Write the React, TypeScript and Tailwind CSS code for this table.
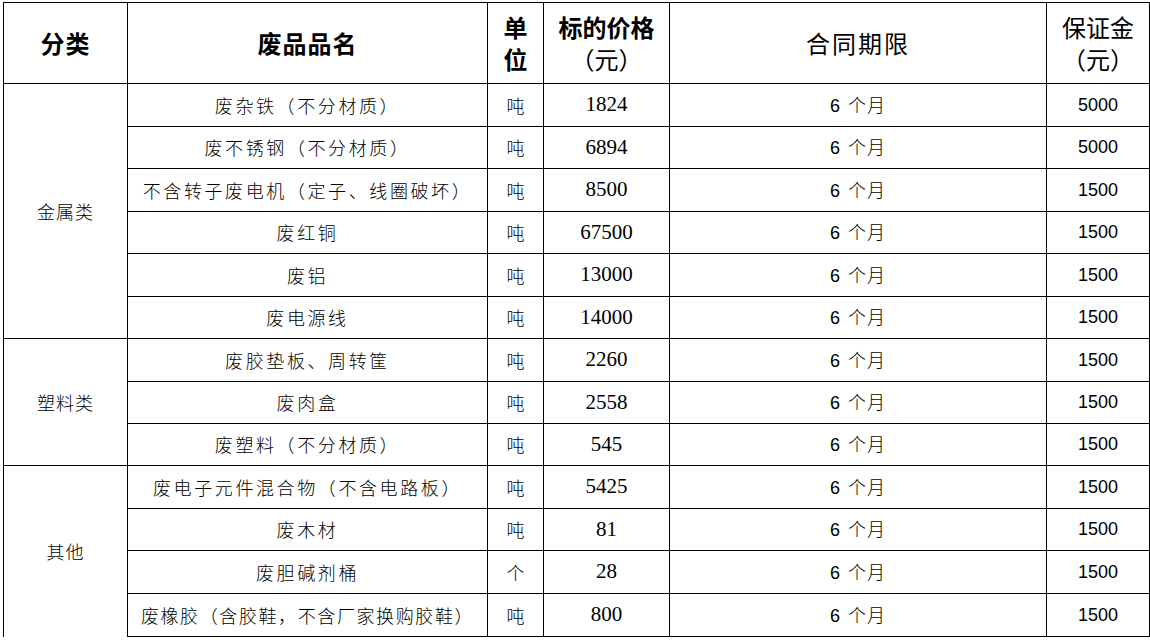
const cjk = "font-['Noto_Sans_CJK_SC',sans-serif]";

interface Item {
  name: string;
  unit: string;
  price: string;
  deposit: string;
  tight?: boolean;
}

interface Group {
  label: string;
  items: Item[];
}

const groups: Group[] = [
  {
    label: '金属类',
    items: [
      { name: '废杂铁（不分材质）', unit: '吨', price: '1824', deposit: '5000' },
      { name: '废不锈钢（不分材质）', unit: '吨', price: '6894', deposit: '5000' },
      { name: '不含转子废电机（定子、线圈破坏）', unit: '吨', price: '8500', deposit: '1500' },
      { name: '废红铜', unit: '吨', price: '67500', deposit: '1500' },
      { name: '废铝', unit: '吨', price: '13000', deposit: '1500' },
      { name: '废电源线', unit: '吨', price: '14000', deposit: '1500' },
    ],
  },
  {
    label: '塑料类',
    items: [
      { name: '废胶垫板、周转筐', unit: '吨', price: '2260', deposit: '1500' },
      { name: '废肉盒', unit: '吨', price: '2558', deposit: '1500' },
      { name: '废塑料（不分材质）', unit: '吨', price: '545', deposit: '1500' },
    ],
  },
  {
    label: '其他',
    items: [
      { name: '废电子元件混合物（不含电路板）', unit: '吨', price: '5425', deposit: '1500' },
      { name: '废木材', unit: '吨', price: '81', deposit: '1500' },
      { name: '废胆碱剂桶', unit: '个', price: '28', deposit: '1500' },
      { name: '废橡胶（含胶鞋，不含厂家换购胶鞋）', unit: '吨', price: '800', deposit: '1500', tight: true },
    ],
  },
];

// row heights measured between grid lines
const rowHeights = [43, 42, 43, 42, 43, 42, 43, 42, 42, 43, 42, 43, 43];

export default function App() {
  let rowIndex = 0;

  return (
    <div className="min-h-[640px] w-[1150px] bg-white pt-[2px] pl-[3px] text-black">
      <table className={`border-collapse table-fixed w-[1146px] ${cjk}`}>
        <colgroup>
          <col className="w-[124px]" />
          <col className="w-[360px]" />
          <col className="w-[56px]" />
          <col className="w-[126px]" />
          <col className="w-[377px]" />
          <col className="w-[103px]" />
        </colgroup>
        <thead>
          <tr className="h-[81px] text-[24px] leading-[32px]">
            <th className="border border-black font-semibold tracking-[1px]">分类</th>
            <th className="border border-black font-semibold tracking-[1px]">废品品名</th>
            <th className="border border-black font-semibold">
              单<br />位
            </th>
            <th className="border border-black font-normal">
              <span className="font-semibold">标的价格</span>
              <br />
              （元）
            </th>
            <th className="border border-black font-normal tracking-[2px]">合同期限</th>
            <th className="border border-black font-normal">
              保证金
              <br />
              （元）
            </th>
          </tr>
        </thead>
        <tbody>
          {groups.map((group, gi) =>
            group.items.map((item, i) => {
              const h = rowHeights[rowIndex++];
              const isLastGroup = gi === groups.length - 1;
              return (
                <tr key={item.name} style={{ height: h }} className="text-center">
                  {i === 0 && (
                    <td
                      rowSpan={group.items.length}
                      className={`border border-black text-[18px] font-light tracking-[1px] ${isLastGroup ? 'border-b-0' : ''}`}
                    >
                      {group.label}
                    </td>
                  )}
                  <td
                    className={`border border-black text-[18px] font-light whitespace-nowrap ${item.tight ? 'tracking-[1.6px]' : 'tracking-[2.6px]'}`}
                  >
                    {item.name}
                  </td>
                  <td className="border border-black text-[18px] font-light">{item.unit}</td>
                  <td className="border border-black font-['Liberation_Serif',serif] text-[21px]">
                    {item.price}
                  </td>
                  <td className="border border-black text-[18px] font-light tracking-[1px]">
                    <span className="font-['Liberation_Sans',sans-serif] mr-[7px]">6</span>个月
                  </td>
                  <td className="border border-black font-['Liberation_Sans',sans-serif] text-[18px]">
                    {item.deposit}
                  </td>
                </tr>
              );
            })
          )}
        </tbody>
      </table>
    </div>
  );
}
